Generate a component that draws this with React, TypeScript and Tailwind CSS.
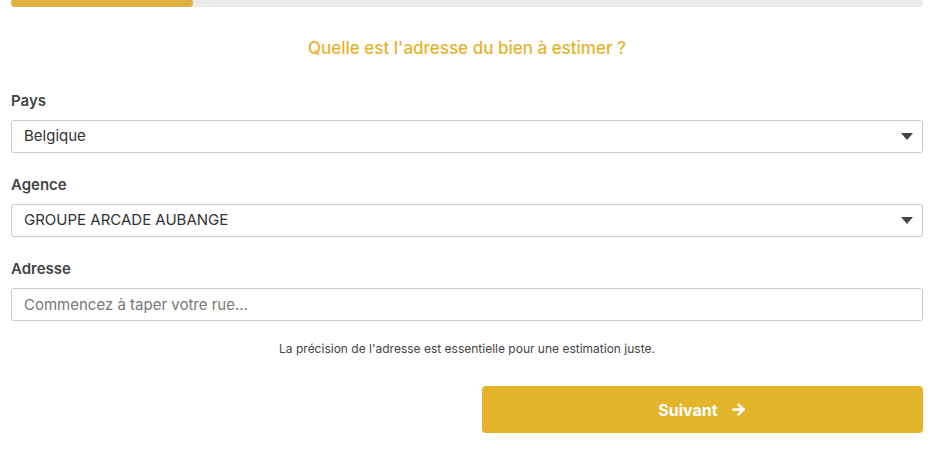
import { ArrowRight } from "lucide-react";

function Caret() {
  return (
    <svg width="12" height="7" viewBox="0 0 12 7" className="shrink-0">
      <path d="M0 0h12L6 7z" fill="#444" />
    </svg>
  );
}

function SelectBox({ label, value }: { label: string; value: string }) {
  return (
    <div className="flex flex-col">
      <label className="text-[15px] font-semibold text-[#444] leading-5 mb-[9px]">{label}</label>
      <div className="h-[33px] border border-[#cccccc] rounded-[3px] flex items-center justify-between pl-3 pr-[9px] text-[15px] text-[#333]">
        <span>{value}</span>
        <Caret />
      </div>
    </div>
  );
}

export default function App() {
  return (
    <div className="w-[937px] h-[459px] bg-white pl-[11px] pr-[14px] font-['Inter',sans-serif] overflow-hidden">
      {/* progress */}
      <div className="h-[8px] bg-[#ebebeb] rounded-full -mt-px">
        <div className="h-full w-[182px] bg-[#dfb03f] rounded-full" />
      </div>

      <h2 className="text-center text-[17px] font-medium text-[#e5b42d] mt-[31px] leading-5">
        Quelle est l'adresse du bien à estimer ?
      </h2>

      <div className="mt-[33px] flex flex-col gap-[22px]">
        <SelectBox label="Pays" value="Belgique" />
        <SelectBox label="Agence" value="GROUPE ARCADE AUBANGE" />
        <div className="flex flex-col">
          <label className="text-[15px] font-semibold text-[#444] leading-5 mb-[9px]">Adresse</label>
          <input
            className="h-[33px] border border-[#cccccc] rounded-[3px] px-3 text-[15px] text-[#333] placeholder:text-[#777] outline-none"
            placeholder="Commencez à taper votre rue..."
          />
        </div>
      </div>

      <p className="text-center text-[12px] text-[#444] mt-[20px] leading-4">
        La précision de l'adresse est essentielle pour une estimation juste.
      </p>

      <div className="grid grid-cols-2 gap-[30px] mt-[29px]">
        <div />
        <button className="h-[47px] bg-[#e5b42d] rounded-[4px] text-white font-bold text-[16px] flex items-center justify-center gap-3">
          Suivant
          <ArrowRight size={17} strokeWidth={3.5} />
        </button>
      </div>
    </div>
  );
}
